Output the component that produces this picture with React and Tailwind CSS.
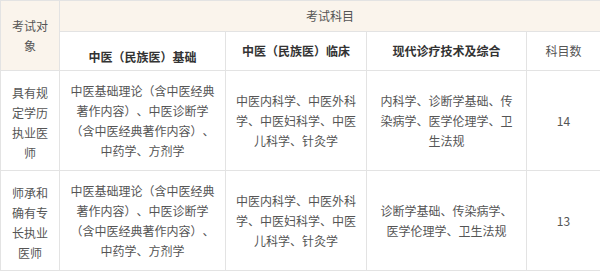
import React from 'react';

const rows = [
    {
        who: '具有规定学历执业医师',
        base: ['中医基础理论（含中医经典', '著作内容）、中医诊断学', '（含中医经典著作内容）、', '中药学、方剂学'],
        clinic: '中医内科学、中医外科学、中医妇科学、中医儿科学、针灸学',
        modern: '内科学、诊断学基础、传染病学、医学伦理学、卫生法规',
        count: '14',
    },
    {
        who: '师承和确有专长执业医师',
        base: ['中医基础理论（含中医经典', '著作内容）、中医诊断学', '（含中医经典著作内容）、', '中药学、方剂学'],
        clinic: '中医内科学、中医外科学、中医妇科学、中医儿科学、针灸学',
        modern: '诊断学基础、传染病学、医学伦理学、卫生法规',
        count: '13',
    },
];

const cell = 'border border-[#e3e3e3] px-[10px] text-center align-middle';

const App = () => {
    return (
        <div
            className="w-[600px] h-[272px] bg-white text-[12px] leading-[20px] text-[#555] [text-spacing-trim:space-all]"
            style={{ fontFamily: '"Noto Sans CJK SC", "Noto Sans", sans-serif' }}
        >
            <table className="w-[600px] table-fixed border-collapse">
                <colgroup>
                    <col className="w-[59px]" />
                    <col className="w-[166px]" />
                    <col className="w-[141px]" />
                    <col className="w-[160px]" />
                    <col className="w-[74px]" />
                </colgroup>
                <thead>
                    <tr className="h-[31px]">
                        <td rowSpan={2} className={`${cell} bg-[#faf4ec]`}>
                            考试对象
                        </td>
                        <td colSpan={4} className={`${cell} bg-[#faf4ec]`}>
                            考试科目
                        </td>
                    </tr>
                    <tr className="h-[39px] font-bold text-[#333]">
                        <td className={`${cell} pt-[12px]`}>中医（民族医）基础</td>
                        <td className={cell}>中医（民族医）临床</td>
                        <td className={cell}>现代诊疗技术及综合</td>
                        <td className={`${cell} font-normal text-[#555]`}>科目数</td>
                    </tr>
                </thead>
                <tbody>
                    {rows.map((r) => (
                        <tr key={r.count} className="h-[100px]">
                            <td className={`${cell} pt-[4px]`}>{r.who}</td>
                            <td className={`${cell} px-[6px]`}>
                                {r.base.map((line) => (
                                    <div key={line} className="whitespace-nowrap">{line}</div>
                                ))}
                            </td>
                            <td className={cell}>{r.clinic}</td>
                            <td className={cell}>{r.modern}</td>
                            <td className={cell}>{r.count}</td>
                        </tr>
                    ))}
                </tbody>
            </table>
        </div>
    );
};

export default App;
